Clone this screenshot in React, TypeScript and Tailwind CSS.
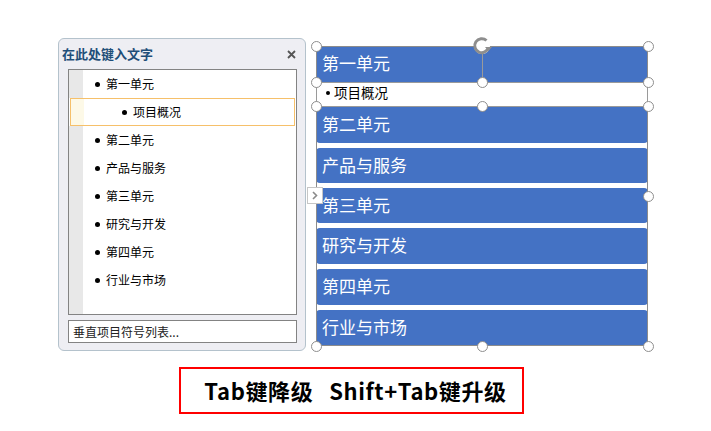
const items: { text: string; level: number; active?: boolean }[] = [
  { text: '第一单元', level: 1 },
  { text: '项目概况', level: 2, active: true },
  { text: '第二单元', level: 1 },
  { text: '产品与服务', level: 1 },
  { text: '第三单元', level: 1 },
  { text: '研究与开发', level: 1 },
  { text: '第四单元', level: 1 },
  { text: '行业与市场', level: 1 }
];

const bars = [
  { text: '第二单元', h: 'h-[37px]' },
  { text: '产品与服务', h: 'h-[35px]' },
  { text: '第三单元', h: 'h-[35px]' },
  { text: '研究与开发', h: 'h-[36px]' },
  { text: '第四单元', h: 'h-[36px]' },
  { text: '行业与市场', h: 'h-[36px]' }
];

// handle centres relative to the diagram box (332 x 300)
const handles = [
  [0, 0], [332, 0],
  [0, 36], [166, 36], [332, 36],
  [0, 60], [166, 60], [332, 60],
  [332, 150],
  [0, 300], [166, 300], [332, 300]
];

function TextPane() {
  return (
    <div className="w-[248px] h-[313px] rounded-[6px] border border-[#b4c2cc] bg-[#eeeef3] flex flex-col">
      <div className="h-[30px] flex items-center justify-between pl-[3px] pr-[9px]">
        <span className="text-[13px] font-bold text-[#1f4e79]">在此处键入文字</span>
        <svg width="9" height="9" viewBox="0 0 9 9" className="mt-[1px]">
          <path d="M1 1L8 8M8 1L1 8" stroke="#555" strokeWidth="1.8" />
        </svg>
      </div>
      <div className="ml-[9px] mr-[8px] h-[246px] border border-[#838383] bg-white flex flex-col">
        {items.map((it) => (
          <div
            key={it.text}
            className={`h-[28px] flex items-stretch ${it.active ? 'border border-[#f6c06a] mx-[1px]' : ''}`}
          >
            <div className={`${it.active ? 'w-[13px] bg-[#fdf9e7]' : 'w-[14px] bg-[#e8e8e8]'}`} />
            <div
              className={`flex items-center text-[12px] text-black ${it.level === 2 ? (it.active ? 'pl-[38px]' : 'pl-[39px]') : 'pl-[12px]'}`}
            >
              <span className="w-[5px] h-[5px] rounded-full bg-black mr-[6px]" />
              {it.text}
            </div>
          </div>
        ))}
        <div className="flex-1 flex">
          <div className="w-[14px] bg-[#e8e8e8]" />
        </div>
      </div>
      <div className="ml-[9px] mr-[8px] mt-[5px] h-[23px] border border-[#838383] bg-white flex items-center pl-[4px] text-[12px] text-[#222]">
        垂直项目符号列表...
      </div>
    </div>
  );
}

function Diagram() {
  return (
    <div className="relative w-[332px] h-[300px] mt-[8px] ml-[10px] flex flex-col">
      <div className="h-[36px] bg-[#4472c4] rounded-t-[3px] flex items-center pl-[6px] pb-[3px] leading-none text-[17px] text-white">
        第一单元
      </div>
      <div className="h-[24px] bg-white flex items-center pl-[10px] pb-[3px] leading-none text-[13.5px] text-black">
        <span className="w-[4px] h-[4px] rounded-full bg-black mr-[4px]" />
        项目概况
      </div>
      <div className="flex flex-col gap-[5px]">
        {bars.map((b, i) => (
          <div
            key={b.text}
            className={`${b.h} bg-[#4472c4] flex items-center pl-[6px] pb-[3px] leading-none text-[17px] text-white ${i === 0 ? 'rounded-b-[4px]' : 'rounded-[4px]'}`}
          >
            {b.text}
          </div>
        ))}
      </div>

      {/* selection frames */}
      <div className="absolute inset-0 border border-[#8c8c8c] pointer-events-none" />
      <div className="absolute left-0 right-0 top-[36px] h-[25px] border border-[#9a9a9a] pointer-events-none" />
      <div className="absolute left-[166px] top-0 w-px h-[36px] bg-[#9a9a9a]" />

      {handles.map(([x, y]) => (
        <div
          key={`${x}-${y}`}
          className="absolute w-[11px] h-[11px] -ml-[5.5px] -mt-[5.5px] rounded-full border-[1.5px] border-[#8e8e8e] bg-white"
          style={{ left: x, top: y }}
        />
      ))}

      {/* rotation handle */}
      <svg width="22" height="22" viewBox="0 0 22 22" className="absolute left-[155px] -top-[11px]">
        <circle cx="11" cy="11" r="8" fill="white" />
        <path d="M17.5 12.5A7 7 0 1 1 15.5 5.5" fill="none" stroke="#8e8e8e" strokeWidth="3" />
        <circle cx="11" cy="11" r="4" fill="white" />
        <path d="M14 12L21 12L17.5 16Z" fill="#8e8e8e" />
      </svg>

      {/* collapse tab */}
      <div className="absolute -left-[9px] top-[141px] w-[16px] h-[17px] bg-white border border-[#c6c6c6] flex items-center justify-center">
        <svg width="6" height="9" viewBox="0 0 6 9">
          <path d="M1 1L4.5 4.5L1 8" fill="none" stroke="#8a8a8a" strokeWidth="1.6" />
        </svg>
      </div>
    </div>
  );
}

export default function App() {
  return (
    <div
      className="w-[711px] h-[431px] bg-white overflow-hidden"
      style={{ fontFamily: '"Noto Sans CJK SC", "Liberation Sans", sans-serif' }}
    >
      <div className="flex pt-[38px] pl-[58px]">
        <TextPane />
        <Diagram />
      </div>
      <div className="ml-[179px] mt-[16px] w-[345px] h-[47px] border-2 border-[#ff0000] flex items-center justify-center pl-[8px] text-[22px] font-bold text-black tracking-[0.6px]">
        <span className="mr-[16px]">Tab键降级</span>
        <span>Shift+Tab键升级</span>
      </div>
    </div>
  );
}
